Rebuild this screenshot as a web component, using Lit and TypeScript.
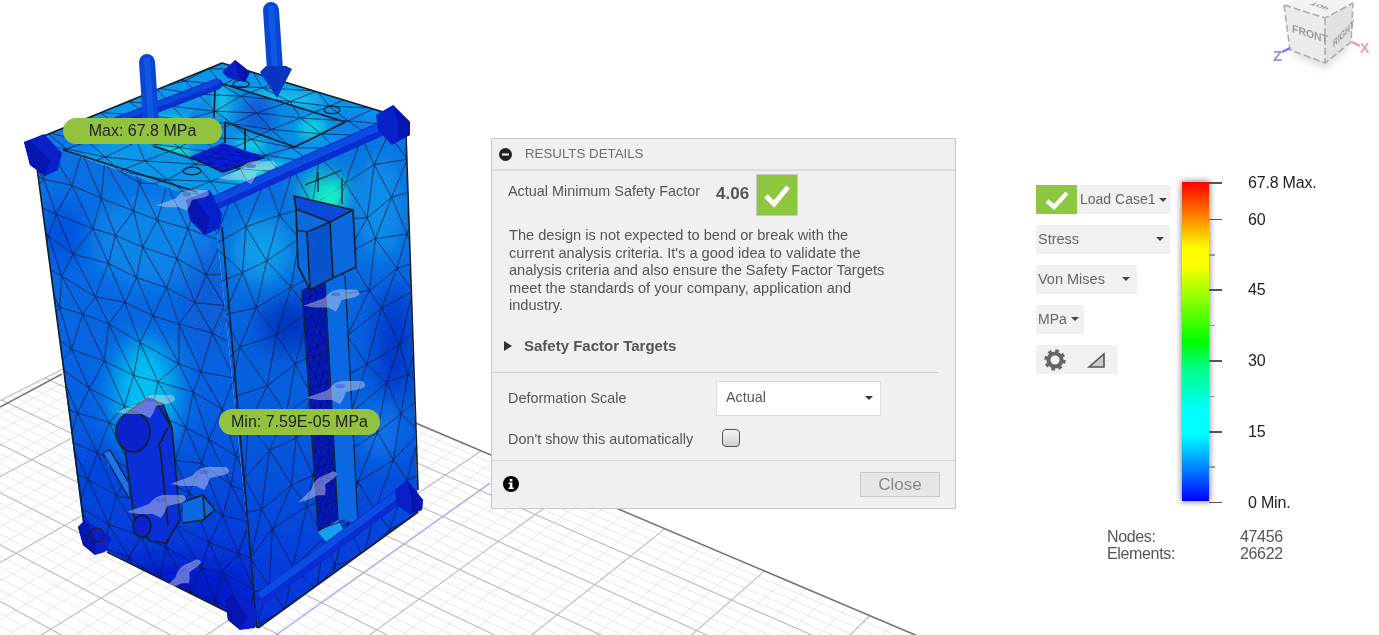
import { LitElement, html, css, svg } from "lit";
import { customElement } from "lit/decorators.js";

type P = [number, number];

function rng(seed: number) {
  let s = seed;
  return () => {
    s = (s * 16807) % 2147483647;
    return s / 2147483647;
  };
}
const f = (n: number) => n.toFixed(1);
const pts = (q: P[]) => q.map((p) => `${p[0]},${p[1]}`).join(" ");

function bilinear(q: P[], u: number, v: number): P {
  const x = (1 - v) * ((1 - u) * q[0][0] + u * q[1][0]) + v * ((1 - u) * q[3][0] + u * q[2][0]);
  const y = (1 - v) * ((1 - u) * q[0][1] + u * q[1][1]) + v * ((1 - u) * q[3][1] + u * q[2][1]);
  return [x, y];
}

function mesh(q: P[], cols: number, rows: number, seed: number, jit = 0.32) {
  const r = rng(seed);
  const g: P[][] = [];
  for (let j = 0; j <= rows + 2; j++) {
    const row: P[] = [];
    for (let i = -1; i <= cols + 1; i++) {
      const u = (i + (j % 2 ? 0.5 : 0) + (r() - 0.5) * jit) / cols;
      const v = (j - 1 + (r() - 0.5) * jit) / rows;
      row.push(bilinear(q, u, v));
    }
    g.push(row);
  }
  let d = "";
  const seg = (a: P, b: P) => {
    d += `M${f(a[0])} ${f(a[1])}L${f(b[0])} ${f(b[1])}`;
  };
  for (let j = 0; j < g.length; j++) {
    for (let i = 0; i < g[j].length; i++) {
      if (i + 1 < g[j].length) seg(g[j][i], g[j][i + 1]);
      if (j + 1 < g.length) {
        seg(g[j][i], g[j + 1][i]);
        const k = j % 2 ? i + 1 : i - 1;
        if (k >= 0 && k < g[j + 1].length) seg(g[j][i], g[j + 1][k]);
      }
    }
  }
  return d;
}

function homography(q: P[]) {
  const [[x0, y0], [x1, y1], [x2, y2], [x3, y3]] = q;
  const sx = x0 - x1 + x2 - x3;
  const sy = y0 - y1 + y2 - y3;
  const dx1 = x1 - x2;
  const dx2 = x3 - x2;
  const dy1 = y1 - y2;
  const dy2 = y3 - y2;
  const den = dx1 * dy2 - dx2 * dy1;
  const g = (sx * dy2 - dx2 * sy) / den;
  const h = (dx1 * sy - sx * dy1) / den;
  const a = x1 - x0 + g * x1;
  const b = x3 - x0 + h * x3;
  const d = y1 - y0 + g * y1;
  const e = y3 - y0 + h * y3;
  return (u: number, v: number): P => {
    const w = g * u + h * v + 1;
    return [(a * u + b * v + x0) / w, (d * u + e * v + y0) / w];
  };
}

const floorMap = homography([
  [166, 317],
  [1100, 713],
  [739, 1167],
  [-300, 552],
]);
function floorPaths(n: number, sub: number) {
  let minor = "";
  let major = "";
  const total = n * sub;
  for (let i = 0; i <= total; i++) {
    const t = i / total;
    const a = floorMap(t, 0);
    const b = floorMap(t, 1);
    const c = floorMap(0, t);
    const e = floorMap(1, t);
    const s = `M${f(a[0])} ${f(a[1])}L${f(b[0])} ${f(b[1])}M${f(c[0])} ${f(c[1])}L${f(e[0])} ${f(e[1])}`;
    if (i % sub === 0) major += s;
    else minor += s;
  }
  return { minor, major };
}
const floor = floorPaths(10, 5);

const faceL: P[] = [[34, 140], [214, 204], [258, 628], [85, 540]];
const faceR: P[] = [[214, 204], [405, 120], [418, 512], [258, 628]];
const faceT: P[] = [[34, 140], [222, 63], [403, 118], [214, 204]];
const hole: P[] = [[222, 83], [345, 122], [290, 150], [270, 160], [222, 175], [190, 157], [158, 146], [215, 90]];
const pit: P[] = [[190, 157], [223, 143], [265, 157], [223, 172]];
const slot: P[] = [[302, 290], [325, 280], [338, 520], [318, 532]];
const channel: P[] = [[325, 280], [345, 275], [358, 523], [338, 520]];

const meshL = mesh(faceL, 6, 12, 1234, 0.38);
const meshR = mesh(faceR, 6, 11, 4567, 0.38);
const meshT = mesh(faceT, 7, 6, 8910);
const meshPit = mesh(pit, 4, 4, 77);
const meshSlot = mesh(slot, 3, 24, 99, 0.2);

const capShapes: { body: P[]; face: P[] }[] = [
  { body: [[24, 142], [44, 134], [62, 153], [58, 170], [45, 176], [30, 165]], face: [[24, 142], [30, 140], [50, 160], [45, 176], [30, 165]] },
  { body: [[186, 200], [210, 190], [222, 214], [220, 228], [205, 235], [190, 220]], face: [[186, 200], [194, 197], [210, 218], [205, 235], [190, 220]] },
  { body: [[376, 115], [393, 105], [410, 122], [410, 135], [392, 145], [378, 130]], face: [[393, 105], [410, 122], [410, 135], [398, 140], [398, 122]] },
  { body: [[222, 72], [235, 60], [250, 72], [245, 82], [228, 78]], face: [[235, 60], [250, 72], [245, 82], [238, 76]] },
  { body: [[78, 527], [85, 520], [112, 538], [105, 552], [95, 555], [83, 545]], face: [[78, 527], [85, 520], [96, 540], [95, 555], [83, 545]] },
  { body: [[225, 600], [240, 590], [258, 612], [255, 628], [240, 630], [228, 620]], face: [[225, 600], [233, 595], [248, 618], [240, 630], [228, 620]] },
  { body: [[395, 490], [407, 480], [423, 500], [422, 510], [410, 515], [397, 505]], face: [[407, 480], [423, 500], [422, 510], [412, 512], [411, 496]] },
];

const marks: [number, number, number, number][] = [
  [247, 172, 1, 0],
  [183, 200, 0.9, 0],
  [332, 300, 0.95, 0],
  [336, 392, 1, 0],
  [146, 406, 1, 0],
  [200, 478, 1, 0],
  [157, 506, 1, 0],
  [318, 488, 0.8, -25],
  [182, 576, 0.8, -25],
];

const gear = svg`<circle cx="12" cy="12" r="6.6" fill="none" stroke="#666" stroke-width="4"></circle><circle cx="12" cy="12" r="9.4" fill="none" stroke="#666" stroke-width="2.6" stroke-dasharray="3.7 3.68"></circle>`;

@customElement("fem-scene")
class FemScene extends LitElement {
  static styles = css`
    :host { display: block; position: absolute; inset: 0; }
    svg { display: block; width: 1379px; height: 635px; filter: blur(0.6px); }
    .minor { fill: none; stroke: #e4e4e4; stroke-width: 0.9; }
    .major { fill: none; stroke: #bbb; stroke-width: 1.1; }
    .edge { fill: none; stroke: #777; stroke-width: 1.5; }
    .axis { fill: none; stroke: #a9a9f2; stroke-width: 1.4; }
    .mesh { fill: none; stroke: #03143c; stroke-opacity: 0.75; stroke-width: 0.9; }
    .fine { fill: none; stroke: #001048; stroke-opacity: 0.7; stroke-width: 0.6; }
    .line { fill: none; stroke: #15202e; stroke-width: 1.7; stroke-linejoin: round; }
    .thin { fill: none; stroke: #1b2430; stroke-width: 1.3; stroke-linejoin: round; }
    .rod0 { fill: none; stroke: #0a2cd0; stroke-width: 14; stroke-linecap: round; }
    .rod1 { fill: none; stroke: #0a4ce2; stroke-width: 7; stroke-linecap: round; }
    .rodb { fill: none; stroke: #0a30cc; stroke-width: 11; stroke-linecap: round; }
    .rodb2 { fill: none; stroke: #0a48dc; stroke-width: 5; stroke-linecap: round; }
    .cap { fill: #0820c8; }
    .capf { fill: #0614b0; }
    .mark { fill: #e6e2ee; fill-opacity: 0.42; }
    .mark-dot { fill: #4468d8; fill-opacity: 0.7; }
    .arrow { fill: none; stroke: #0a46d4; stroke-width: 16; stroke-linecap: round; }
    .arrow-hi { fill: none; stroke: #0c58e2; stroke-width: 6; }
    .head { fill: #0636c0; }
    .arm { fill: #0a2ed8; }
    .pinface { fill: #0a22c8; }
    .wedge { fill: #1a74f0; }
    .tip { fill: #12c0f0; }
    .block { fill: #0a6ade; }
    .blockd { fill: #0854cc; }
    .blocktop { fill: #0a4ad8; }
    .slot { fill: #0618b8; }
    .chan { fill: #0a68e2; }
    .bit { fill: #18a0f0; }
    .pit { fill: #0a1ce0; }
    .holefill { fill: #0a8ae6; }
    .mint { fill: #12f0c6; }
  `;

  private glow(cx: number, cy: number, rx: number, ry: number, c: string) {
    return svg`<ellipse cx=${cx} cy=${cy} rx=${rx} ry=${ry} fill=${c}></ellipse>`;
  }

  render() {
    return html`<svg viewBox="0 0 1379 635" aria-hidden="true">
      <defs>
        <filter id="soft" x="-40%" y="-40%" width="180%" height="180%"><feGaussianBlur stdDeviation="13"></feGaussianBlur></filter>
        <filter id="softer" x="-40%" y="-40%" width="180%" height="180%"><feGaussianBlur stdDeviation="6"></feGaussianBlur></filter>
        <clipPath id="cL"><polygon points=${pts(faceL)}></polygon></clipPath>
        <clipPath id="cR"><polygon points=${pts(faceR)}></polygon></clipPath>
        <clipPath id="cT"><polygon points=${pts(faceT)}></polygon></clipPath>
        <clipPath id="cH"><polygon points=${pts(hole)}></polygon></clipPath>
        <clipPath id="cP"><polygon points=${pts(pit)}></polygon></clipPath>
        <clipPath id="cS"><polygon points=${pts(slot)}></polygon></clipPath>
        <linearGradient id="gL" x1="0" y1="0" x2="0" y2="1">
          <stop offset="0" stop-color="#0a72e4"></stop>
          <stop offset="0.55" stop-color="#0660e0"></stop>
          <stop offset="1" stop-color="#0420d2"></stop>
        </linearGradient>
        <linearGradient id="gR" x1="0" y1="0" x2="0" y2="1">
          <stop offset="0" stop-color="#0a74e2"></stop>
          <stop offset="0.6" stop-color="#065cdc"></stop>
          <stop offset="1" stop-color="#0430da"></stop>
        </linearGradient>
      </defs>

      <path class="minor" d=${floor.minor}></path>
      <path class="major" d=${floor.major}></path>
      <path class="edge" d="M0 407L62 374M413 422L960 654"></path>
      <path class="axis" d="M276 635L490 483"></path>

      <polygon fill="#0a96ea" points=${pts(faceT)}></polygon>
      <g clip-path="url(#cT)">
        <g filter="url(#softer)">
          ${this.glow(170, 130, 34, 12, "#14e0d8")}
          ${this.glow(280, 100, 40, 10, "#12c0ec")}
          ${this.glow(350, 125, 30, 12, "#0a80e8")}
          ${this.glow(70, 140, 30, 10, "#0a70e8")}
          ${this.glow(260, 172, 30, 10, "#18d8dc")}
        </g>
        <path class="mesh" d=${meshT}></path>
      </g>
      <polygon fill="url(#gL)" points=${pts(faceL)}></polygon>
      <g clip-path="url(#cL)">
        <g filter="url(#soft)">
          ${this.glow(150, 240, 60, 46, "#0a84e8")}
          ${this.glow(145, 395, 32, 56, "#02c0f0")}
          ${this.glow(65, 235, 24, 30, "#0650de")}
          ${this.glow(205, 300, 20, 50, "#0a5cd6")}
          ${this.glow(170, 590, 70, 24, "#0218c8")}
          ${this.glow(110, 480, 28, 30, "#0544dc")}
        </g>
        <path class="mesh" d=${meshL}></path>
      </g>
      <polygon fill="url(#gR)" points=${pts(faceR)}></polygon>
      <g clip-path="url(#cR)">
        <g filter="url(#soft)">
          ${this.glow(262, 250, 30, 34, "#08a0e8")}
          ${this.glow(322, 196, 18, 26, "#14f2c0")}
          ${this.glow(380, 205, 22, 55, "#0a90e8")}
          ${this.glow(290, 325, 30, 28, "#0434c0")}
          ${this.glow(395, 345, 18, 60, "#0630c8")}
          ${this.glow(380, 430, 18, 30, "#0a78e8")}
        </g>
        <path class="mesh" d=${meshR}></path>
      </g>

      <polygon class="mint" filter="url(#softer)" points="318,192 342,178 342,204 322,212"></polygon>
      <polygon class="chan" points=${pts(channel)}></polygon>
      <polygon class="slot" points=${pts(slot)}></polygon>
      <g clip-path="url(#cS)"><path class="fine" d=${meshSlot}></path></g>
      <polygon class="bit" points="318,532 338,520 345,532 326,542"></polygon>

      <polygon class="holefill" points=${pts(hole)}></polygon>
      <g clip-path="url(#cH)">
        <g filter="url(#softer)">
          ${this.glow(258, 118, 16, 24, "#0a60d8")}
          ${this.glow(312, 128, 14, 12, "#10d0e0")}
          ${this.glow(172, 152, 20, 8, "#12f0c8")}
          ${this.glow(250, 145, 16, 8, "#10d8e4")}
          ${this.glow(222, 100, 8, 20, "#12c8e0")}
        </g>
        <path class="mesh" d=${meshT}></path>
      </g>
      <polygon class="pit" points=${pts(pit)}></polygon>
      <g clip-path="url(#cP)"><path class="fine" d=${meshPit}></path></g>

      <path class="line" d="M34 140L222 63L403 118M63 150L197 192M220 83L345 122L295 147M225 122L295 147M225 122L225 143M245 129L245 150M190 157L223 172L265 157M215 88L214 118M153 146L196 160"></path>
      <path class="line" d="M36 160L85 530M222 227L257 628M406 135L418 490M107 552L240 618M258 628L418 512"></path>
      <path class="thin" d="M302 290L318 530M325 282L338 520M345 276L358 523M318 530L345 520"></path>
      <ellipse class="thin" cx="241" cy="84" rx="8" ry="3.6"></ellipse>
      <ellipse class="thin" cx="332" cy="110" rx="8" ry="3.6"></ellipse>
      <ellipse class="thin" cx="192" cy="171" rx="9" ry="3.8"></ellipse>

      <polygon class="blocktop" points="294,196 353,210 330,222 296,209"></polygon>
      <polygon class="block" points="296,209 330,222 307,232 296,230"></polygon>
      <polygon class="block" points="296,209 307,232 310,290 298,266"></polygon>
      <polygon class="blockd" points="307,232 330,222 333,278 310,290"></polygon>
      <polygon class="block" points="330,222 353,210 356,267 333,278"></polygon>
      <path class="line" d="M294 196L353 210L330 222L296 209ZM296 230L307 232L330 222M307 232L310 290L333 278L356 267L353 210M330 222L333 278M296 209L298 266L310 290"></path>
      <path class="thin" d="M318 192L318 172M342 178L342 204M305 185L342 170"></path>

      <path class="rodb" d="M95 131L217 84"></path>
      <path class="rodb2" d="M95 129L217 82"></path>
      <path class="rod0" d="M208 206L392 124"></path>
      <path class="rod1" d="M214 201L388 123"></path>
      <path class="rod0" d="M262 598L402 494"></path>
      <path class="rod1" d="M262 594L402 491"></path>
      ${capShapes.map(
        (c) => svg`<polygon class="cap" points=${pts(c.body)}></polygon><polygon class="capf" points=${pts(c.face)}></polygon>`
      )}
      <circle class="thin" cx="97" cy="535" r="7"></circle>

      <polygon class="tip" points="103,452 110,451 116,463 109,466"></polygon>
      <polygon class="wedge" points="103,453 110,451 128,482 129,498"></polygon>
      <path class="thin" d="M103 453L110 450L128 482M103 453L129 498"></path>
      <polygon class="arm" points="128,412 147,398 163,404 172,428 180,520 166,543 150,541 134,518 125,448"></polygon>
      <path class="line" d="M128 412L147 398L163 404L172 428L180 520L166 543L150 541L134 518L125 448M155 400L172 428M158 447L168 427M160 447L168 525"></path>
      <ellipse class="pinface" cx="133" cy="432" rx="17" ry="20"></ellipse>
      <ellipse class="line" cx="133" cy="432" rx="17" ry="20"></ellipse>
      <ellipse class="pinface" cx="142" cy="526" rx="9" ry="11"></ellipse>
      <ellipse class="line" cx="142" cy="526" rx="9" ry="11"></ellipse>
      <polygon class="chan" points="183,502 203,495 215,510 203,520 183,523"></polygon>
      <path class="line" d="M183 502L203 495L215 510L203 520L183 523M203 495L205 520"></path>

      ${marks.map(
        ([x, y, s, r]) => svg`<g transform="translate(${x} ${y}) rotate(${r}) scale(${s})">
          <path class="mark" d="M-30 6L-8-2Q0-13 14-11L26-11Q33-6 24-3L10 0Q8 7 4 12L-4 8L-18 8Z"></path>
          <ellipse class="mark-dot" cx="4" cy="-6" rx="5" ry="2"></ellipse>
        </g>`
      )}

      <path class="arrow" d="M147 62L151 122"></path>
      <path class="arrow-hi" d="M147 58L151 122"></path>
      <path class="arrow" d="M271 10L275 70"></path>
      <path class="arrow-hi" d="M271 6L275 70"></path>
      <polygon class="head" points="260,72 266,66 286,66 292,69 277,98"></polygon>
    </svg>
    <slot></slot>`;
  }
}

@customElement("view-cube")
class ViewCube extends LitElement {
  static styles = css`
    :host { display: block; position: absolute; left: 1260px; top: 0; width: 119px; height: 80px; }
    svg { display: block; width: 119px; height: 80px; filter: blur(0.6px); }
    .front { fill: #ececec; }
    .right { fill: #e2e2e2; }
    .top { fill: #f2f2f2; }
    .edge { fill: none; stroke: #aeaeae; stroke-width: 1.6; stroke-dasharray: 7 3; }
    .shadow { fill: #b8b8b8; fill-opacity: 0.55; }
    .lbl { font: bold 11px "Liberation Sans", Arial, sans-serif; fill: #9a9a9a; }
    .z { stroke: #6e7cf0; stroke-width: 2.4; fill: none; }
    .x { stroke: #f09a9a; stroke-width: 2.4; fill: none; }
    .zt { font: bold 15px "Liberation Sans", Arial, sans-serif; fill: #8792f4; }
    .xt { font: bold 14px "Liberation Sans", Arial, sans-serif; fill: #f29c9c; }
  `;
  render() {
    return html`<svg viewBox="0 0 119 80" aria-hidden="true">
      <defs><filter id="s" x="-40%" y="-40%" width="180%" height="180%"><feGaussianBlur stdDeviation="5"></feGaussianBlur></filter></defs>
      <polygon class="shadow" filter="url(#s)" points="30,52 65,68 92,44 66,40"></polygon>
      <polygon class="top" points="24,5 65,18 93,3 60,-14"></polygon>
      <polygon class="front" points="24,5 65,18 65,63 30,50"></polygon>
      <polygon class="right" points="65,18 93,3 91,42 65,63"></polygon>
      <path class="edge" d="M24 5L65 18L93 3M65 18L65 63M24 5L30 50L65 63L91 42L93 3"></path>
      <text class="lbl" transform="matrix(0.95 0.3 0 1 32 32)">FRONT</text>
      <text class="lbl" transform="matrix(0.62 -0.62 0 1 73 48)">RIGHT</text>
      <text class="lbl" transform="matrix(0.8 0.25 0.5 -0.3 53 2)">TOP</text>
      <path class="z" d="M22 52L30 48"></path>
      <text class="zt" x="13" y="61">Z</text>
      <path class="x" d="M92 42L100 46"></path>
      <text class="xt" x="100" y="53">X</text>
    </svg>`;
  }
}

@customElement("results-panel")
class ResultsPanel extends LitElement {
  static styles = css`
    :host {
      display: flex; flex-direction: column; position: absolute; left: 491px; top: 138px;
      width: 465px; height: 371px; box-sizing: border-box;
      background: #f0f0f0; border: 1px solid #c9c9c9;
      font: 14.4px/17.5px "Liberation Sans", Arial, sans-serif; color: #555;
      filter: blur(0.45px);
    }
    .head { display: flex; align-items: center; gap: 13px; height: 30px; padding-left: 7px; border-bottom: 2px solid #dcdcdc; color: #6e6e6e; flex: none; font-size: 13.3px; }
    .head svg { display: block; width: 13px; height: 13px; }
    .factor { display: grid; grid-template-columns: 208px 40px 42px; align-items: center; margin: 3px 0 0 16px; height: 42px; }
    .factor .lab { margin-top: -6px; }
    .factor b { font-size: 17px; color: #555; margin-top: -3px; }
    .check { width: 42px; height: 42px; box-sizing: border-box; background: #8dc63f; border: 1px solid #c6c6c6; display: flex; align-items: center; justify-content: center; }
    .check svg { display: block; width: 30px; height: 30px; }
    p { margin: 11px 0 0 17px; width: 410px; font-size: 14.6px; }
    .targets { display: flex; align-items: center; gap: 12px; margin: 21px 0 0 12px; height: 20px; font-weight: bold; font-size: 15px; color: #555; }
    .tri { width: 0; height: 0; border-left: 8px solid #333; border-top: 5px solid transparent; border-bottom: 5px solid transparent; }
    .rule { height: 1px; background: #cfcfcf; margin: 16px 0 0 1px; width: 445px; flex: none; }
    .scale { display: grid; grid-template-columns: 208px 165px; align-items: center; margin: 8px 0 0 16px; }
    .scale > span { padding-top: 2px; }
    .select { height: 35px; box-sizing: border-box; background: #fff; border: 1px solid #dcdcdc; display: flex; align-items: center; justify-content: space-between; padding: 0 7px 0 9px; }
    .caret { width: 0; height: 0; border-top: 4px solid #333; border-left: 4px solid transparent; border-right: 4px solid transparent; }
    .auto { display: grid; grid-template-columns: 214px 18px; align-items: center; margin: 13px 0 0 16px; height: 18px; }
    .auto > span:first-child { padding-top: 2px; white-space: nowrap; }
    .box { width: 18px; height: 18px; box-sizing: border-box; border: 1.5px solid #555; border-radius: 4px; background: linear-gradient(#f4f4f4, #cfcfcf); }
    .foot { display: flex; align-items: center; justify-content: space-between; flex: 1; margin-top: 13px; padding: 0 15px 0 11px; border-top: 1px solid #d4d4d4; }
    .foot svg { display: block; width: 16px; height: 16px; }
    .close { width: 80px; height: 25px; box-sizing: border-box; background: #e6e6e6; border: 1px solid #c8c8c8; color: #888; font-size: 17px; line-height: 23px; text-align: center; }
  `;
  render() {
    return html`
      <div class="head">
        <svg viewBox="0 0 13 13"><circle cx="6.5" cy="6.5" r="6.5" fill="#222"></circle><rect x="3" y="5.4" width="7" height="2.2" fill="#e8e8e8"></rect></svg>
        <span>RESULTS DETAILS</span>
      </div>
      <div class="factor">
        <span class="lab">Actual Minimum Safety Factor</span>
        <b>4.06</b>
        <div class="check"><svg viewBox="0 0 30 30"><path d="M4 16L12 24L26 7" fill="none" stroke="#fff" stroke-width="5"></path></svg></div>
      </div>
      <p>The design is not expected to bend or break with the<br>current analysis criteria. It's a good idea to validate the<br>analysis criteria and also ensure the Safety Factor Targets<br>meet the standards of your company, application and<br>industry.</p>
      <div class="targets"><span class="tri"></span><span>Safety Factor Targets</span></div>
      <div class="rule"></div>
      <div class="scale">
        <span>Deformation Scale</span>
        <div class="select"><span>Actual</span><span class="caret"></span></div>
      </div>
      <div class="auto"><span>Don't show this automatically</span><span class="box"></span></div>
      <div class="foot">
        <svg viewBox="0 0 16 16"><circle cx="8" cy="8" r="8" fill="#000"></circle><rect x="6.8" y="3" width="2.6" height="2.4" fill="#fff"></rect><path d="M5.6 6.6H9.4V11.6H10.6V13H5.6V11.6H6.8V8H5.6Z" fill="#fff"></path></svg>
        <div class="close">Close</div>
      </div>
    `;
  }
}

const scale: { label: string; major: boolean }[] = [
  { label: "67.8 Max.", major: true },
  { label: "60", major: true },
  { label: "", major: false },
  { label: "45", major: true },
  { label: "", major: false },
  { label: "30", major: true },
  { label: "", major: false },
  { label: "15", major: true },
  { label: "", major: false },
  { label: "0 Min.", major: true },
];

@customElement("legend-panel")
class LegendPanel extends LitElement {
  static styles = css`
    :host {
      display: flex; flex-direction: column; position: absolute; left: 1036px; top: 182px;
      font: 14.5px/18px "Liberation Sans", Arial, sans-serif; color: #666;
      filter: blur(0.45px);
    }
    .top { display: flex; align-items: flex-start; }
    .controls { display: flex; flex-direction: column; align-items: flex-start; gap: 11px; width: 146px; padding-top: 3px; }
    .ctl { display: flex; align-items: center; justify-content: space-between; height: 29px; box-sizing: border-box; background: #f1f1f1; padding: 0 5px 2px 2px; color: #666; }
    .case { width: 135px; padding: 0 4px 0 0; font-size: 14px; }
    .case .name { padding-bottom: 2px; }
    .stress { width: 134px; padding-right: 6px; }
    .mises { width: 101px; padding-right: 7px; }
    .mpa { width: 48px; font-size: 14px; }
    .tools { width: 82px; padding: 0 10px 0 7px; }
    .ok { display: flex; align-items: center; justify-content: center; width: 41px; height: 29px; background: #8dc63f; margin-right: 3px; flex: none; }
    .ok svg { display: block; width: 24px; height: 20px; }
    .name { flex: 1; white-space: nowrap; }
    .caret { width: 0; height: 0; border-top: 4px solid #444; border-left: 4px solid transparent; border-right: 4px solid transparent; flex: none; }
    .tools svg { display: block; width: 24px; height: 24px; }
    .bar { width: 27px; height: 319px; background: linear-gradient(#f00 0%, #ff7a00 10%, #ff0 21%, #ff0 26%, #0f0 50%, #00ff80 58%, #0ff 72%, #0ff 79%, #0080ff 90%, #00f 100%); box-shadow: 0 0 6px 1px rgba(0,0,0,.45); flex: none; }
    .ticks { display: flex; flex-direction: column; color: #222; font-size: 16px; }
    .row { display: flex; align-items: flex-start; height: 35.4px; }
    .row:first-child { height: 36.7px; }
    .row:last-child { height: 1px; }
    .tick { height: 1.5px; background: #555; width: 13px; margin-right: 26px; flex: none; }
    .tick.short { width: 6px; background: #999; }
    .lab { line-height: 0; white-space: nowrap; letter-spacing: -0.2px; padding-top: 1px; }
    .stats { display: grid; grid-template-columns: 133px auto; margin: 25px 0 0 71px; line-height: 17.5px; color: #555; font-size: 16px; letter-spacing: -0.35px; }
  `;
  render() {
    return html`
      <div class="top">
        <div class="controls">
          <div class="ctl case">
            <span class="ok"><svg viewBox="0 0 24 20"><path d="M2 11L9 17L22 3" fill="none" stroke="#fff" stroke-width="4.4"></path></svg></span>
            <span class="name">Load Case1</span><span class="caret"></span>
          </div>
          <div class="ctl stress"><span>Stress</span><span class="caret"></span></div>
          <div class="ctl mises"><span>Von Mises</span><span class="caret"></span></div>
          <div class="ctl mpa"><span>MPa</span><span class="caret"></span></div>
          <div class="ctl tools">
            <svg viewBox="0 0 24 24">${gear}</svg>
            <svg viewBox="0 0 24 24"><path d="M5 19L20 6V19Z" fill="#ccc" stroke="#555" stroke-width="1.6"></path></svg>
          </div>
        </div>
        <div class="bar"></div>
        <div class="ticks">
          ${scale.map(
            (s) => html`<div class="row"><span class="tick ${s.major ? "" : "short"}"></span>${s.label ? html`<span class="lab">${s.label}</span>` : ""}</div>`
          )}
        </div>
      </div>
      <div class="stats">
        <span>Nodes:</span><span>47456</span>
        <span>Elements:</span><span>26622</span>
      </div>
    `;
  }
}

@customElement("app-root")
class AppRoot extends LitElement {
  static styles = css`
    :host { display: block; position: relative; width: 1379px; height: 635px; overflow: hidden; background: #fff; }
    .pill {
      position: absolute; height: 26px; border-radius: 13px; background: #93c23f; color: #222;
      font: 16px/26px "Liberation Sans", Arial, sans-serif; text-align: center; filter: blur(0.35px);
    }
    .max { left: 63px; top: 118px; width: 159px; }
    .min { left: 219px; top: 409px; width: 161px; }
  `;
  render() {
    return html`
      <fem-scene></fem-scene>
      <div class="pill max">Max: 67.8 MPa</div>
      <div class="pill min">Min: 7.59E-05 MPa</div>
      <view-cube></view-cube>
      <results-panel></results-panel>
      <legend-panel></legend-panel>
    `;
  }
}
export { FemScene, ViewCube, ResultsPanel, LegendPanel, AppRoot };
